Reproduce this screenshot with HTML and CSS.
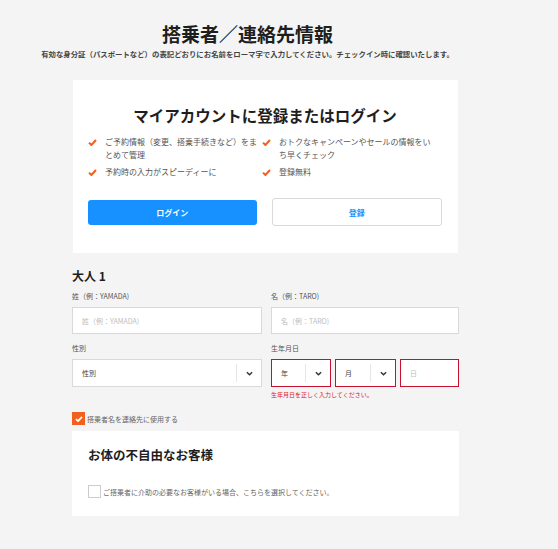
FILE: index.html
```html
<!DOCTYPE html>
<html lang="ja">
<head>
    <meta charset="UTF-8">
    <meta name="viewport" content="width=device-width, initial-scale=1.0">
    <title>搭乗者／連絡先情報</title>
    <link rel="stylesheet" href="styles.css">
</head>
<body>
    <header class="page-head">
        <h1>搭乗者／連絡先情報</h1>
        <p>有効な身分証（パスポートなど）の表記どおりにお名前をローマ字で入力してください。チェックイン時に確認いたします。</p>
    </header>

    <main class="content">
        <section class="card login-card">
            <h2>マイアカウントに登録またはログイン</h2>
            <ul class="benefits">
                <li>
                    <svg class="tick" viewBox="0 0 9 7"><path d="M1 3.6 L3.4 6 L8 1"/></svg>
                    <span>ご予約情報（変更、搭乗手続きなど）をまとめて管理</span>
                </li>
                <li>
                    <svg class="tick" viewBox="0 0 9 7"><path d="M1 3.6 L3.4 6 L8 1"/></svg>
                    <span>おトクなキャンペーンやセールの情報をいち早くチェック</span>
                </li>
                <li>
                    <svg class="tick" viewBox="0 0 9 7"><path d="M1 3.6 L3.4 6 L8 1"/></svg>
                    <span>予約時の入力がスピーディーに</span>
                </li>
                <li>
                    <svg class="tick" viewBox="0 0 9 7"><path d="M1 3.6 L3.4 6 L8 1"/></svg>
                    <span>登録無料</span>
                </li>
            </ul>
            <div class="buttons">
                <button class="btn btn-primary">ログイン</button>
                <button class="btn btn-outline">登録</button>
            </div>
        </section>

        <section class="passenger">
            <h3>大人 1</h3>
            <div class="row">
                <div class="field">
                    <label>姓（例：YAMADA)</label>
                    <input class="input" type="text" placeholder="姓（例：YAMADA)">
                </div>
                <div class="field">
                    <label>名（例：TARO)</label>
                    <input class="input" type="text" placeholder="名（例：TARO)">
                </div>
            </div>
            <div class="row">
                <div class="field">
                    <label>性別</label>
                    <div class="select">
                        <span class="select-value">性別</span>
                        <span class="select-arrow">
                            <svg viewBox="0 0 8 5"><path d="M1 1 L4 4 L7 1"/></svg>
                        </span>
                    </div>
                </div>
                <div class="field">
                    <label>生年月日</label>
                    <div class="date-row">
                        <div class="select select-error">
                            <span class="select-value">年</span>
                            <span class="select-arrow">
                                <svg viewBox="0 0 8 5"><path d="M1 1 L4 4 L7 1"/></svg>
                            </span>
                        </div>
                        <div class="select select-error">
                            <span class="select-value">月</span>
                            <span class="select-arrow">
                                <svg viewBox="0 0 8 5"><path d="M1 1 L4 4 L7 1"/></svg>
                            </span>
                        </div>
                        <input class="input input-error" type="text" placeholder="日">
                    </div>
                    <p class="error-text">生年月日を正しく入力してください。</p>
                </div>
            </div>

            <div class="check-line">
                <span class="checkbox checked">
                    <svg viewBox="0 0 9 7"><path d="M1 3.6 L3.4 6 L8 1"/></svg>
                </span>
                <span>搭乗者名を連絡先に使用する</span>
            </div>
        </section>

        <section class="card assist-card">
            <h2>お体の不自由なお客様</h2>
            <div class="check-line">
                <span class="checkbox"></span>
                <span>ご搭乗者に介助の必要なお客様がいる場合、こちらを選択してください。</span>
            </div>
        </section>
    </main>
</body>
</html>
```

FILE: styles.css
```css
body {
    margin: 0;
    padding: 0;
    background-color: #f4f4f4;
    color: #222;
    font-family: "Noto Sans CJK JP", "Noto Sans", sans-serif;
}

.page-head {
    width: 417px;
    margin-left: 39px;
    padding-top: 21px;
    text-align: center;
}

.page-head h1 {
    margin: 0;
    font-size: 19px;
    line-height: 26px;
    font-weight: 700;
    color: #1e1e1e;
}

.page-head p {
    margin: 2px 0 0;
    font-size: 7.4px;
    line-height: 10px;
    font-weight: 700;
    color: #444;
    white-space: nowrap;
}

.content {
    width: 387px;
    margin-left: 72px;
    padding-top: 21px;
}

.card {
    background: #fff;
}

.login-card {
    width: 385px;
    margin-left: 1px;
    padding: 25px 16px 27px 15px;
    box-sizing: border-box;
}

.login-card h2 {
    margin: 0;
    text-align: center;
    font-size: 15.5px;
    line-height: 20px;
    font-weight: 700;
    color: #1e1e1e;
}

.benefits {
    list-style: none;
    margin: 10px 0 0;
    padding: 0;
    display: grid;
    grid-template-columns: 174px 1fr;
    row-gap: 4px;
}

.benefits li {
    display: flex;
    align-items: flex-start;
    font-size: 8px;
    line-height: 13px;
    color: #555;
}

.benefits li span {
    width: 157px;
}

.tick {
    width: 9px;
    height: 7px;
    margin: 4px 8px 0 0;
    flex-shrink: 0;
}

.tick path,
.checkbox path {
    fill: none;
    stroke: #f0601f;
    stroke-width: 2;
}

.buttons {
    display: flex;
    align-items: center;
    gap: 15px;
    margin-top: 20px;
}

.btn {
    flex: 1;
    font-family: inherit;
    font-size: 8px;
    font-weight: 700;
    border-radius: 3px;
    cursor: pointer;
}

.btn-primary {
    height: 25px;
    border: none;
    background: #1791ff;
    color: #fff;
}

.btn-outline {
    height: 28px;
    border: 1px solid #d9d9d9;
    background: #fff;
    color: #1791ff;
}

.passenger h3 {
    margin: 15px 0 0;
    font-size: 12px;
    line-height: 16px;
    font-weight: 700;
    color: #1e1e1e;
}

.row {
    display: grid;
    grid-template-columns: 190px 188px;
    column-gap: 9px;
    margin-top: 7px;
}

.row + .row {
    margin-top: 9px;
}

.field label {
    display: block;
    font-size: 7px;
    line-height: 10px;
    color: #555;
    margin-bottom: 6px;
}

.input {
    display: block;
    width: 100%;
    height: 27px;
    box-sizing: border-box;
    border: 1px solid #d9d9d9;
    background: #fff;
    padding: 0 9px;
    font-family: inherit;
    font-size: 7px;
    outline: none;
}

.input::placeholder {
    color: #bdbdbd;
}

.select {
    display: flex;
    align-items: center;
    height: 28px;
    box-sizing: border-box;
    border: 1px solid #d9d9d9;
    background: #fff;
    font-size: 7px;
    color: #444;
}

.select-value {
    flex: 1;
    padding-left: 9px;
}

.select-arrow {
    display: flex;
    align-items: center;
    justify-content: center;
    width: 24px;
    height: 18px;
    border-left: 1px solid #e6e6e6;
}

.select-arrow svg {
    width: 7px;
    height: 5px;
}

.select-arrow path {
    fill: none;
    stroke: #333;
    stroke-width: 1.6;
}

.date-row {
    display: grid;
    grid-template-columns: 60px 61px 1fr;
    column-gap: 4px;
}

.date-row .input {
    height: 28px;
}

.select-error,
.input-error {
    border: 1px solid #c8102e;
}

.error-text {
    margin: 4px 0 0;
    font-size: 6px;
    line-height: 8px;
    color: #e0151f;
}

.check-line {
    display: flex;
    align-items: center;
    gap: 2px;
    font-size: 7px;
    color: #666;
}

.passenger .check-line {
    margin-top: 13px;
}

.checkbox {
    display: flex;
    align-items: center;
    justify-content: center;
    width: 13px;
    height: 13px;
    box-sizing: border-box;
    border: 1px solid #ccc;
    background: #fff;
    flex-shrink: 0;
}

.checkbox.checked {
    border-color: #f0601f;
    background: #f0601f;
}

.checkbox svg {
    width: 8px;
    height: 6px;
}

.checkbox.checked path {
    stroke: #fff;
}

.assist-card {
    margin-top: 6px;
    padding: 16px 16px 18px;
}

.assist-card h2 {
    margin: 0;
    font-size: 12.5px;
    line-height: 16px;
    font-weight: 700;
    color: #1e1e1e;
}

.assist-card .check-line {
    margin-top: 22px;
}
```
